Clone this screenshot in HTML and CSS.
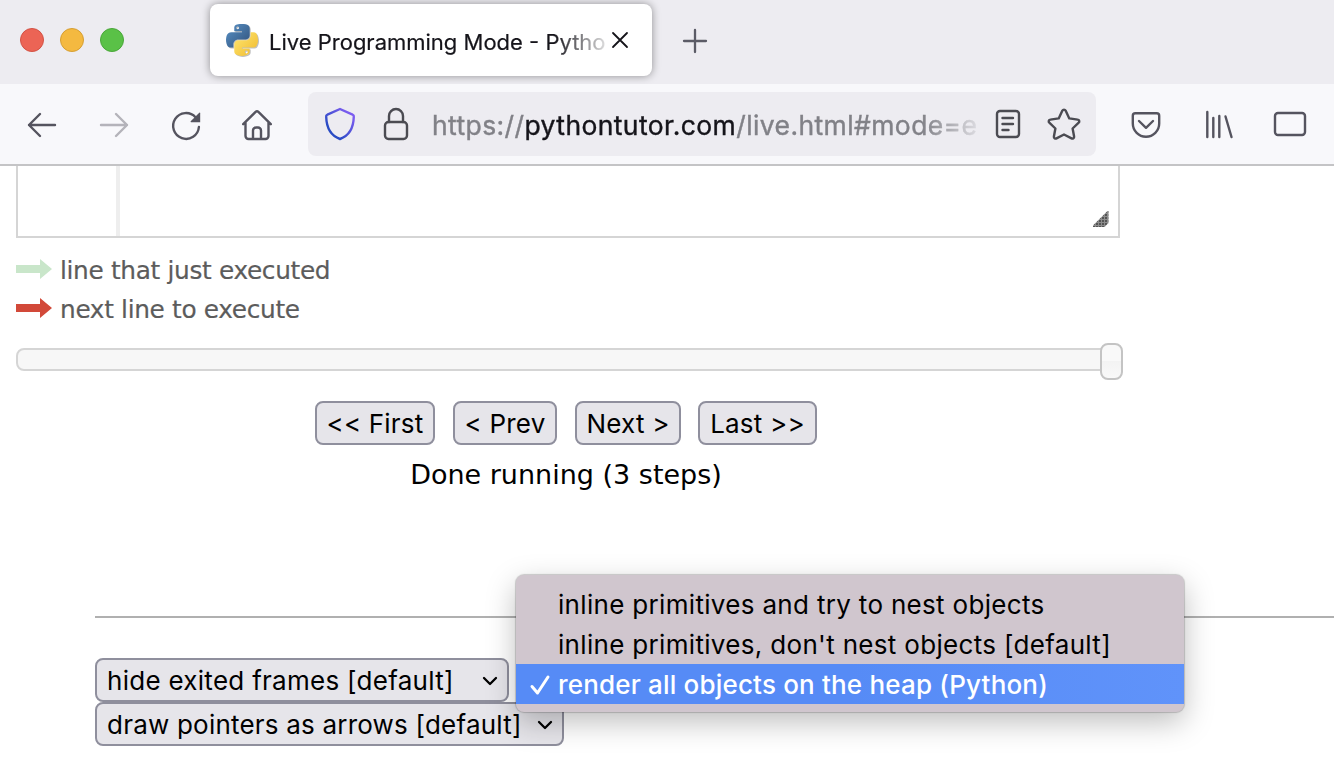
FILE: index.html
```
<!DOCTYPE html>
<html lang="en">
<head>
<meta charset="utf-8">
<title>Live Programming Mode - Python Tutor</title>
<link rel="stylesheet" href="styles.css">
</head>
<body>
<div class="window">
  <header class="tabs">
    <div class="lights"><i class="light red"></i><i class="light yellow"></i><i class="light green"></i></div>
    <div class="tab">
      <svg class="favicon" viewBox="12.8 1.8 102.4 104" preserveAspectRatio="none">
        <defs>
          <linearGradient id="pyblue" x1="0" y1="0" x2="1" y2="1"><stop offset="0" stop-color="#5a93c8"/><stop offset="1" stop-color="#2f4f78"/></linearGradient>
          <linearGradient id="pyyellow" x1="0" y1="0" x2="1" y2="1"><stop offset="0" stop-color="#ffe873"/><stop offset="1" stop-color="#f0b92c"/></linearGradient>
        </defs>
        <path fill="url(#pyblue)" d="M63.391 1.988c-4.222.02-8.252.379-11.8 1.007-10.45 1.846-12.346 5.71-12.346 12.837v9.411h24.693v3.137H29.977c-7.176 0-13.46 4.313-15.426 12.521-2.268 9.405-2.368 15.275 0 25.096 1.755 7.311 5.947 12.519 13.124 12.519h8.491V67.234c0-8.151 7.051-15.34 15.426-15.34h24.665c6.866 0 12.346-5.654 12.346-12.548V15.833c0-6.693-5.646-11.72-12.346-12.837-4.244-.706-8.645-1.027-12.866-1.008zM50.037 9.557c2.55 0 4.634 2.117 4.634 4.721 0 2.593-2.083 4.69-4.634 4.69-2.56 0-4.633-2.097-4.633-4.69-.001-2.604 2.073-4.721 4.633-4.721z"/>
        <path fill="url(#pyyellow)" d="M91.682 28.38v10.966c0 8.5-7.208 15.655-15.426 15.655H51.591c-6.756 0-12.346 5.783-12.346 12.549v23.515c0 6.691 5.818 10.628 12.346 12.547 7.816 2.297 15.312 2.713 24.665 0 6.216-1.801 12.346-5.423 12.346-12.547v-9.412H63.938v-3.138h37.012c7.176 0 9.852-5.005 12.348-12.519 2.578-7.735 2.467-15.174 0-25.096-1.774-7.145-5.161-12.521-12.348-12.521h-9.268zM77.809 87.927c2.561 0 4.634 2.097 4.634 4.692 0 2.602-2.074 4.719-4.634 4.719-2.55 0-4.633-2.117-4.633-4.719 0-2.595 2.083-4.692 4.633-4.692z"/>
      </svg>
      <span class="tab-title">Live Programming Mode - Pytho</span>
      <svg class="close" viewBox="0 0 16 16"><path d="M1 1l14 14M15 1L1 15"/></svg>
    </div>
    <svg class="plus" viewBox="0 0 24 24"><path d="M12 1v22M1 12h22"/></svg>
  </header>

  <nav class="toolbar">
    <svg class="icon back" viewBox="0 0 32 32"><path d="M29 16H3M14 5L3 16l11 11"/></svg>
    <svg class="icon forward" viewBox="0 0 32 32"><path d="M3 16h26M18 5l11 11-11 11"/></svg>
    <svg class="icon reload" viewBox="0 0 32 32"><path d="M25.500 7.200A12.900 12.900 0 1 0 28.900 17"/><path class="solid" d="M29.300 2.700q.9-.5.9.5v9h-9q-1-.1-.5-.9z"/></svg>
    <svg class="icon home" viewBox="0 0 32 32"><path d="M2.200 15.200L14.600 2.900a2 2 0 0 1 2.800 0L29.800 15.200M4.500 13.500V27a3 3 0 0 0 3 3h17a3 3 0 0 0 3-3V13.500M12 29.500V21.500a3 3 0 0 1 3-3h2a3 3 0 0 1 3 3v8"/></svg>
    <div class="urlbar">
      <svg class="shield" viewBox="0 0 32 34">
        <defs><linearGradient id="shieldfill" x1="0" y1="1" x2="1" y2="0"><stop offset=".25" stop-color="#2a4cc4"/><stop offset=".85" stop-color="#7c5cf0"/></linearGradient></defs>
        <path stroke="url(#shieldfill)" d="M16 2L28.600 7.600a2 2 0 0 1 1.200 2.200C29.500 20 26 28.500 16 32 6 28.500 2.500 20 2.200 9.800a2 2 0 0 1 1.200-2.200z"/>
      </svg>
      <svg class="lock" viewBox="0 0 26 34"><rect x="2" y="15" width="22" height="17" rx="3.500"/><path d="M6 15V9a7 7 0 0 1 14 0v6"/></svg>
      <div class="url">https://<b>pythontutor.com</b>/live.html#mode=e</div>
      <svg class="reader" viewBox="0 0 26 30"><rect x="2" y="2" width="22" height="26" rx="3"/><path d="M7.500 9h10.500M7.500 15h10.500M7.500 21h6"/></svg>
      <svg class="star" viewBox="0 0 34 32"><path d="M15.400 2.600a1.800 1.800 0 0 1 3.200 0L22.300 10.400l8.400 1.200a1.700 1.700 0 0 1 1 3L25.600 20.500l1.500 8a1.800 1.800 0 0 1-2.600 1.900L17 26.500l-7.500 3.900a1.800 1.800 0 0 1-2.600-1.900l1.500-8L2.300 14.600a1.700 1.700 0 0 1 1-3l8.400-1.200z"/></svg>
    </div>
    <svg class="icon pocket" viewBox="0 0 32 32"><path d="M5.300 4.300h21.400a2.500 2.500 0 0 1 2.500 2.500v7.700a13.200 13.200 0 0 1-26.400 0V6.800a2.500 2.500 0 0 1 2.500-2.500zM9 12l7 6.800 7-6.800"/></svg>
    <svg class="icon library" viewBox="0 0 32 32"><path d="M4.300 3v25M10.300 9v19M16.300 7v21M22.500 7.500L28.500 28"/></svg>
    <svg class="icon sidebar" viewBox="0 0 34 32"><rect x="2" y="5" width="30" height="22" rx="3"/></svg>
  </nav>

  <main class="page">
    <div class="editor"><div class="gutter"></div>
      <svg class="grip" viewBox="0 0 16 16"><defs><pattern id="dots" width="3" height="3" patternUnits="userSpaceOnUse"><rect width="3" height="3" fill="#8c8c8c"/><rect width="2" height="2" fill="#555"/></pattern></defs><path fill="url(#dots)" d="M14.500 0h1v12l-4 4H0v-1.500z"/></svg>
    </div>
    <div class="legend">
      <div class="legend-row"><svg class="arrow done" viewBox="0 0 36 20"><path d="M0 6h24V0l12 10-12 10v-6H0z"/></svg><span class="just">line that just executed</span></div>
      <div class="legend-row"><svg class="arrow next" viewBox="0 0 36 20"><path d="M0 6h24V0l12 10-12 10v-6H0z"/></svg><span class="upcoming">next line to execute</span></div>
    </div>
    <div class="slider"><div class="handle"></div></div>
    <div class="steps">
      <button class="btn first">&lt;&lt; First</button>
      <button class="btn prev">&lt; Prev</button>
      <button class="btn nxt">Next &gt;</button>
      <button class="btn last">Last &gt;&gt;</button>
    </div>
    <div class="status"><span>Done running (3 steps)</span></div>
    <section class="options">
      <div class="select frames"><span>hide exited frames [default]</span><svg class="chev" viewBox="0 0 16 10"><path d="M2 2l6 6 6-6"/></svg></div>
      <div class="select pointers"><span>draw pointers as arrows [default]</span><svg class="chev" viewBox="0 0 16 10"><path d="M2 2l6 6 6-6"/></svg></div>
    </section>
  </main>

  <div class="menu">
    <div class="item"><span class="opt-a">inline primitives and try to nest objects</span></div>
    <div class="item"><span class="opt-b">inline primitives, don't nest objects [default]</span></div>
    <div class="item selected"><svg class="check" viewBox="0 0 20 20"><path d="M2 11.500l5.500 6.500L18 2"/></svg><span class="opt-c">render all objects on the heap (Python)</span></div>
  </div>
</div>
</body>
</html>
```
FILE: styles.css
```
* { box-sizing: border-box; }
body { margin: 0; background: #fff; font-family: Inter, sans-serif; color: #000; }
svg { display: block; flex: none; overflow: visible; fill: none; stroke-linecap: round; stroke-linejoin: round; }
.window { position: relative; width: 1334px; height: 770px; overflow: hidden; display: flex; flex-direction: column; }

.tabs { height: 84px; flex: none; background: #edecf1; display: flex; align-items: flex-start; overflow: hidden; }
.lights { display: flex; gap: 16px; padding: 28px 0 0 20px; width: 210px; flex: none; }
.light { width: 24px; height: 24px; border-radius: 50%; border: 1px solid; }
.red { background: #ec6455; border-color: #d35245; }
.yellow { background: #f4b940; border-color: #d69f33; }
.green { background: #5ac147; border-color: #4aa73a; }
.tab { width: 442px; height: 72px; margin-top: 4px; background: #fff; border-radius: 8px; box-shadow: 0 0 8px rgba(0,0,0,.4); display: flex; align-items: center; padding-left: 16px; flex: none; }
.favicon { width: 32px; height: 32px; filter: drop-shadow(1px 1px .5px rgba(0,0,0,.25)); }
.tab-title { margin: 3px 0 0 11px; width: 340px; white-space: nowrap; font-size: 22px; line-height: 32px; color: #15141a; -webkit-text-stroke: .2px; -webkit-mask-image: linear-gradient(90deg, #000 285px, transparent 345px); mask-image: linear-gradient(90deg, #000 285px, transparent 345px); }
.close { width: 16px; height: 16px; margin-left: 3px; stroke: #15141a; stroke-width: 1.8; }
.plus { width: 24px; height: 24px; margin: 29px 0 0 31px; stroke: #5b5b66; stroke-width: 2.3; }

.toolbar { height: 82px; flex: none; background: #f8f8fb; border-bottom: 2px solid #c4c4c6; display: flex; align-items: center; padding-left: 26px; }
.icon { width: 32px; height: 32px; stroke: #55545f; stroke-width: 2.4; margin-top: 2px; }
.forward, .reload { margin-left: 40px; }
.forward { opacity: .42; }
.reload { margin-top: 4px; }
.solid { fill: #55545f; stroke: none; }
.home { margin-left: 39px; }
.urlbar { width: 788px; height: 64px; margin-left: 35px; background: #edecf1; border-radius: 8px; display: flex; align-items: center; padding-left: 16px; flex: none; stroke: #4b4b52; stroke-width: 2.4; }
.shield { width: 32px; height: 34px; }
.lock { width: 26px; height: 34px; margin-left: 27px; }
.url { width: 550px; margin: 1px 0 0 23px; white-space: nowrap; font-size: 26.500px; letter-spacing: .4px; line-height: 40px; color: #818187; -webkit-text-stroke: .4px; -webkit-mask-image: linear-gradient(90deg, #000 490px, transparent 556px); mask-image: linear-gradient(90deg, #000 490px, transparent 556px); }
.url b { font-weight: 400; color: #15141a; }
.reader { width: 26px; height: 30px; margin-left: 13px; }
.star { width: 34px; height: 32px; margin-left: 26px; }
.pocket { margin-left: 34px; }
.library { margin-left: 41px; }
.sidebar { width: 34px; margin: 0 0 0 38px; }

.page { flex: 1; display: flex; flex-direction: column; align-items: flex-start; }
.editor { width: 1104px; height: 72px; margin-left: 16px; border: 2px solid #d5d5d5; border-top: 0; display: flex; justify-content: space-between; align-items: flex-end; padding-right: 9px; }
.gutter { width: 102px; height: 70px; border-right: 4px solid #eee; }
.grip { width: 16px; height: 16px; margin-bottom: 9px; }
.legend { padding: 12px 0 0 16px; font: 24.800px/39px "DejaVu Sans", sans-serif; color: #5c5c5c; letter-spacing: -.34px; }
.legend-row { height: 39px; display: flex; align-items: center; gap: 8px; white-space: nowrap; }
.legend-row span { padding-top: 2px; -webkit-text-stroke: .2px; }
.arrow { width: 36px; height: 20px; margin-bottom: 1px; }
.done { fill: #c9e6ca; }
.next { fill: #d24939; }
.slider { width: 1104px; height: 23px; margin: 20px 0 0 16px; border: 2px solid #d5d5d5; border-radius: 8px; background: #f7f7f7; display: flex; justify-content: flex-end; }
.handle { width: 23px; height: 37px; flex: none; margin: -7px -5px 0 0; border: 2px solid #c4c4c4; border-radius: 8px; background: linear-gradient(#f9f9f9 50%, #f3f3f3 50%, #f9f9f9); }
.steps { display: flex; margin: 30px 0 0 315px; }
.btn { height: 44px; padding: 1px 0 0; border: 2px solid #8f8f9d; border-radius: 8px; background: #e6e5ea; font: 26px/40px Inter, sans-serif; letter-spacing: .2px; white-space: nowrap; color: #000; }
.first { width: 120px; margin-right: 18px; }
.prev { width: 104px; margin-right: 18px; }
.nxt { width: 106px; margin-right: 17px; }
.last { width: 119px; }
.status { width: 1132px; margin-top: 10px; text-align: center; font: 27px/40px "DejaVu Sans", sans-serif; }
.options { margin: 121px 0 0 95px; width: 1239px; border-top: 2px solid #b0b0b0; padding-top: 40px; }
.select { height: 44px; border: 2px solid #8f8f9d; border-radius: 8px; background: #e6e5ea; display: flex; align-items: center; justify-content: space-between; padding: 0 9px 0 10px; font-size: 26px; letter-spacing: .28px; white-space: nowrap; }
.frames { width: 414px; }
.pointers { width: 469px; letter-spacing: .21px; }
.chev { width: 16px; height: 10px; margin-top: 2px; stroke: #000; stroke-width: 2.3; }

.menu { position: absolute; left: 516px; top: 575px; width: 668px; height: 137px; padding-top: 9px; background: #d0c6ce; border-radius: 8px; box-shadow: 0 0 1px 1px rgba(0,0,0,.18), 0 10px 30px rgba(0,0,0,.26); font-size: 26px; letter-spacing: .32px; }
.item { height: 40px; padding: 2px 0 0 42px; display: flex; align-items: center; line-height: 38px; white-space: nowrap; }
.selected { background: linear-gradient(90deg, #568bf6, #568bf6 50%, #6093fa); color: #fff; padding-left: 14px; gap: 8px; font-weight: 500; letter-spacing: .18px; }
.check { width: 20px; height: 20px; stroke: #fff; stroke-width: 3; }
```
